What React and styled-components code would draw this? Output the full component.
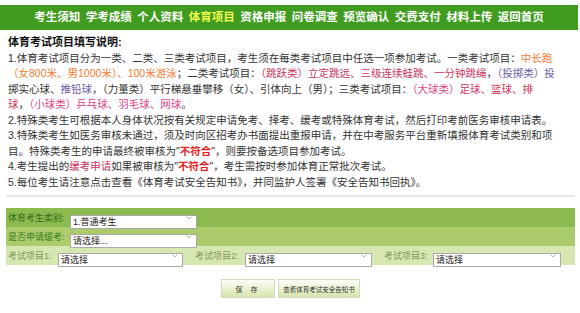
import React from "react";
import styled, { createGlobalStyle } from "styled-components";
import { ChevronDown } from "lucide-react";

const GlobalStyle = createGlobalStyle`
  body {
    margin: 0;
    background: #fff;
    font-family: "Liberation Sans", "Noto Sans CJK SC", sans-serif;
    color: #333;
  }
`;

const Page = styled.div`
  width: 578px;
`;

const Nav = styled.div`
  margin-top: 5px;
  height: 25px;
  background-color: #3f9c1f;
  display: flex;
  justify-content: center;
  align-items: center;
  gap: 5.5px;
`;

const NavItem = styled.a`
  color: ${(props) => (props.$active ? "#f2fa52" : "#fff")};
  font-size: 11.5px;
  font-weight: 700;
  line-height: 1;
  text-decoration: none;
  white-space: nowrap;
`;

const Content = styled.div`
  padding: 5px 3px 0 6px;
`;

const Heading = styled.div`
  padding-left: 2px;
  font-size: 11px;
  font-weight: 700;
  line-height: 15.5px;
  color: #111;
`;

const Line = styled.div`
  padding-left: 2px;
  font-size: 10.5px;
  line-height: 15.5px;
  white-space: nowrap;
  color: #333;
`;

const Hl = styled.span`
  color: ${(props) => props.$c};
  font-weight: ${(props) => (props.$bold ? 700 : 400)};
`;

const Divider = styled.div`
  margin-top: 5px;
  height: 2px;
  background-color: #e8e8e8;
`;

const Form = styled.div`
  margin-top: 11px;
`;

const FormRow = styled.div`
  height: 19px;
  display: flex;
  align-items: center;
  gap: ${(props) => props.$gap || 0}px;
  padding-left: 2px;
  background-color: ${(props) => props.$bg};
`;

const Field = styled.div`
  display: flex;
  align-items: center;
`;

const Label = styled.span`
  width: ${(props) => props.$w}px;
  font-size: 9px;
  color: ${(props) => props.$c};
  white-space: nowrap;
`;

const SelectWrap = styled.div`
  position: relative;
  width: ${(props) => props.$w}px;
  height: 14px;
`;

const Select = styled.select`
  appearance: none;
  width: 100%;
  height: 100%;
  margin: 0;
  padding: 0 12px 0 2px;
  border: 1px solid #a9a9a9;
  border-radius: 0;
  background: #fff;
  font-family: inherit;
  font-size: 9px;
  color: #222;
  outline: none;
`;

const Chevron = styled.span`
  position: absolute;
  right: 4px;
  top: 3px;
  display: flex;
  color: #888;
  pointer-events: none;
`;

const ButtonBar = styled.div`
  margin-top: 14px;
  display: flex;
  justify-content: center;
  gap: 3px;
`;

const Button = styled.button`
  width: ${(props) => props.$w}px;
  height: 19px;
  padding: 0;
  border: 1px solid #d2dabd;
  background: linear-gradient(#fdfef8, #d5e5ab);
  font-family: inherit;
  font-size: ${(props) => props.$fs}px;
  letter-spacing: ${(props) => props.$ls || 0}px;
  color: #333;
  cursor: pointer;
`;

const menu = [
  "考生须知",
  "学考成绩",
  "个人资料",
  "体育项目",
  "资格申报",
  "问卷调查",
  "预览确认",
  "交费支付",
  "材料上传",
  "返回首页",
];

const ORANGE = "#f07a32";
const CRIMSON = "#c9345c";
const PURPLE = "#6c5ba8";
const PINK = "#dc4487";
const RED = "#e42222";

const Picker = ({ w, value }) => (
  <SelectWrap $w={w}>
    <Select defaultValue={value}>
      <option>{value}</option>
    </Select>
    <Chevron>
      <ChevronDown size={8} strokeWidth={2} />
    </Chevron>
  </SelectWrap>
);

const App = () => {
  return (
    <Page>
      <GlobalStyle />
      <Nav>
        {menu.map((item) => (
          <NavItem key={item} href="#" $active={item === "体育项目"}>
            {item}
          </NavItem>
        ))}
      </Nav>
      <Content>
        <Heading>体育考试项目填写说明:</Heading>
        <Line>
          1.体育考试项目分为一类、二类、三类考试项目，考生须在每类考试项目中任选一项参加考试。一类考试项目：
          <Hl $c={ORANGE}>中长跑</Hl>
        </Line>
        <Line>
          <Hl $c={ORANGE}>（女800米、男1000米）、100米游泳</Hl>；二类考试项目：
          <Hl $c={CRIMSON}>（跳跃类）立定跳远、三级连续蛙跳、一分钟跳绳</Hl>，
          <Hl $c={PURPLE}>（投掷类）投</Hl>
        </Line>
        <Line>
          掷实心球、<Hl $c={PURPLE}>推铅球</Hl>，（力量类）平行梯悬垂攀移（女）、引体向上（男）；三类考试项目：
          <Hl $c={PINK}>（大球类）</Hl>
          <Hl $c={CRIMSON}>足球、篮球、排</Hl>
        </Line>
        <Line>
          <Hl $c={CRIMSON}>球</Hl>，<Hl $c={PINK}>（小球类）乒乓球、羽毛球、网球</Hl>。
        </Line>
        <Line>
          2.特殊类考生可根据本人身体状况按有关规定申请免考、择考、缓考或特殊体育考试，然后打印考前医务审核申请表。
        </Line>
        <Line>
          3.特殊类考生如医务审核未通过，须及时向区招考办书面提出重报申请，并在中考服务平台重新填报体育考试类别和项
        </Line>
        <Line>
          目。特殊类考生的申请最终被审核为"<Hl $c={RED} $bold>不符合</Hl>"，则要按备选项目参加考试。
        </Line>
        <Line>
          4.考生提出的<Hl $c={CRIMSON}>缓考申请</Hl>如果被审核为"
          <Hl $c={RED} $bold>不符合</Hl>"，考生需按时参加体育正常批次考试。
        </Line>
        <Line>
          5.每位考生请注意点击查看《体育考试安全告知书》，并同监护人签署《安全告知书回执》。
        </Line>
        <Divider />
        <Form>
          <FormRow $bg="#8dba4f">
            <Label $w={62} $c="#2f6e16">体育考生类别:</Label>
            <Picker w={127} value="1.普通考生" />
          </FormRow>
          <FormRow $bg="#abcb6d">
            <Label $w={62} $c="#3c7d1e">是否申请缓考:</Label>
            <Picker w={127} value="请选择..." />
          </FormRow>
          <FormRow $bg="#d6e7b2" $gap={12}>
            <Field>
              <Label $w={50} $c="#7a985a">考试项目1:</Label>
              <Picker w={125} value="请选择" />
            </Field>
            <Field>
              <Label $w={50} $c="#7a985a">考试项目2:</Label>
              <Picker w={127} value="请选择" />
            </Field>
            <Field>
              <Label $w={49} $c="#7a985a">考试项目3:</Label>
              <Picker w={128} value="请选择" />
            </Field>
          </FormRow>
        </Form>
        <ButtonBar>
          <Button $w={54} $fs={7} $ls={3}>
            保 存
          </Button>
          <Button $w={82} $fs={6.5}>
            查看体育考试安全告知书
          </Button>
        </ButtonBar>
      </Content>
    </Page>
  );
};

export default App;
